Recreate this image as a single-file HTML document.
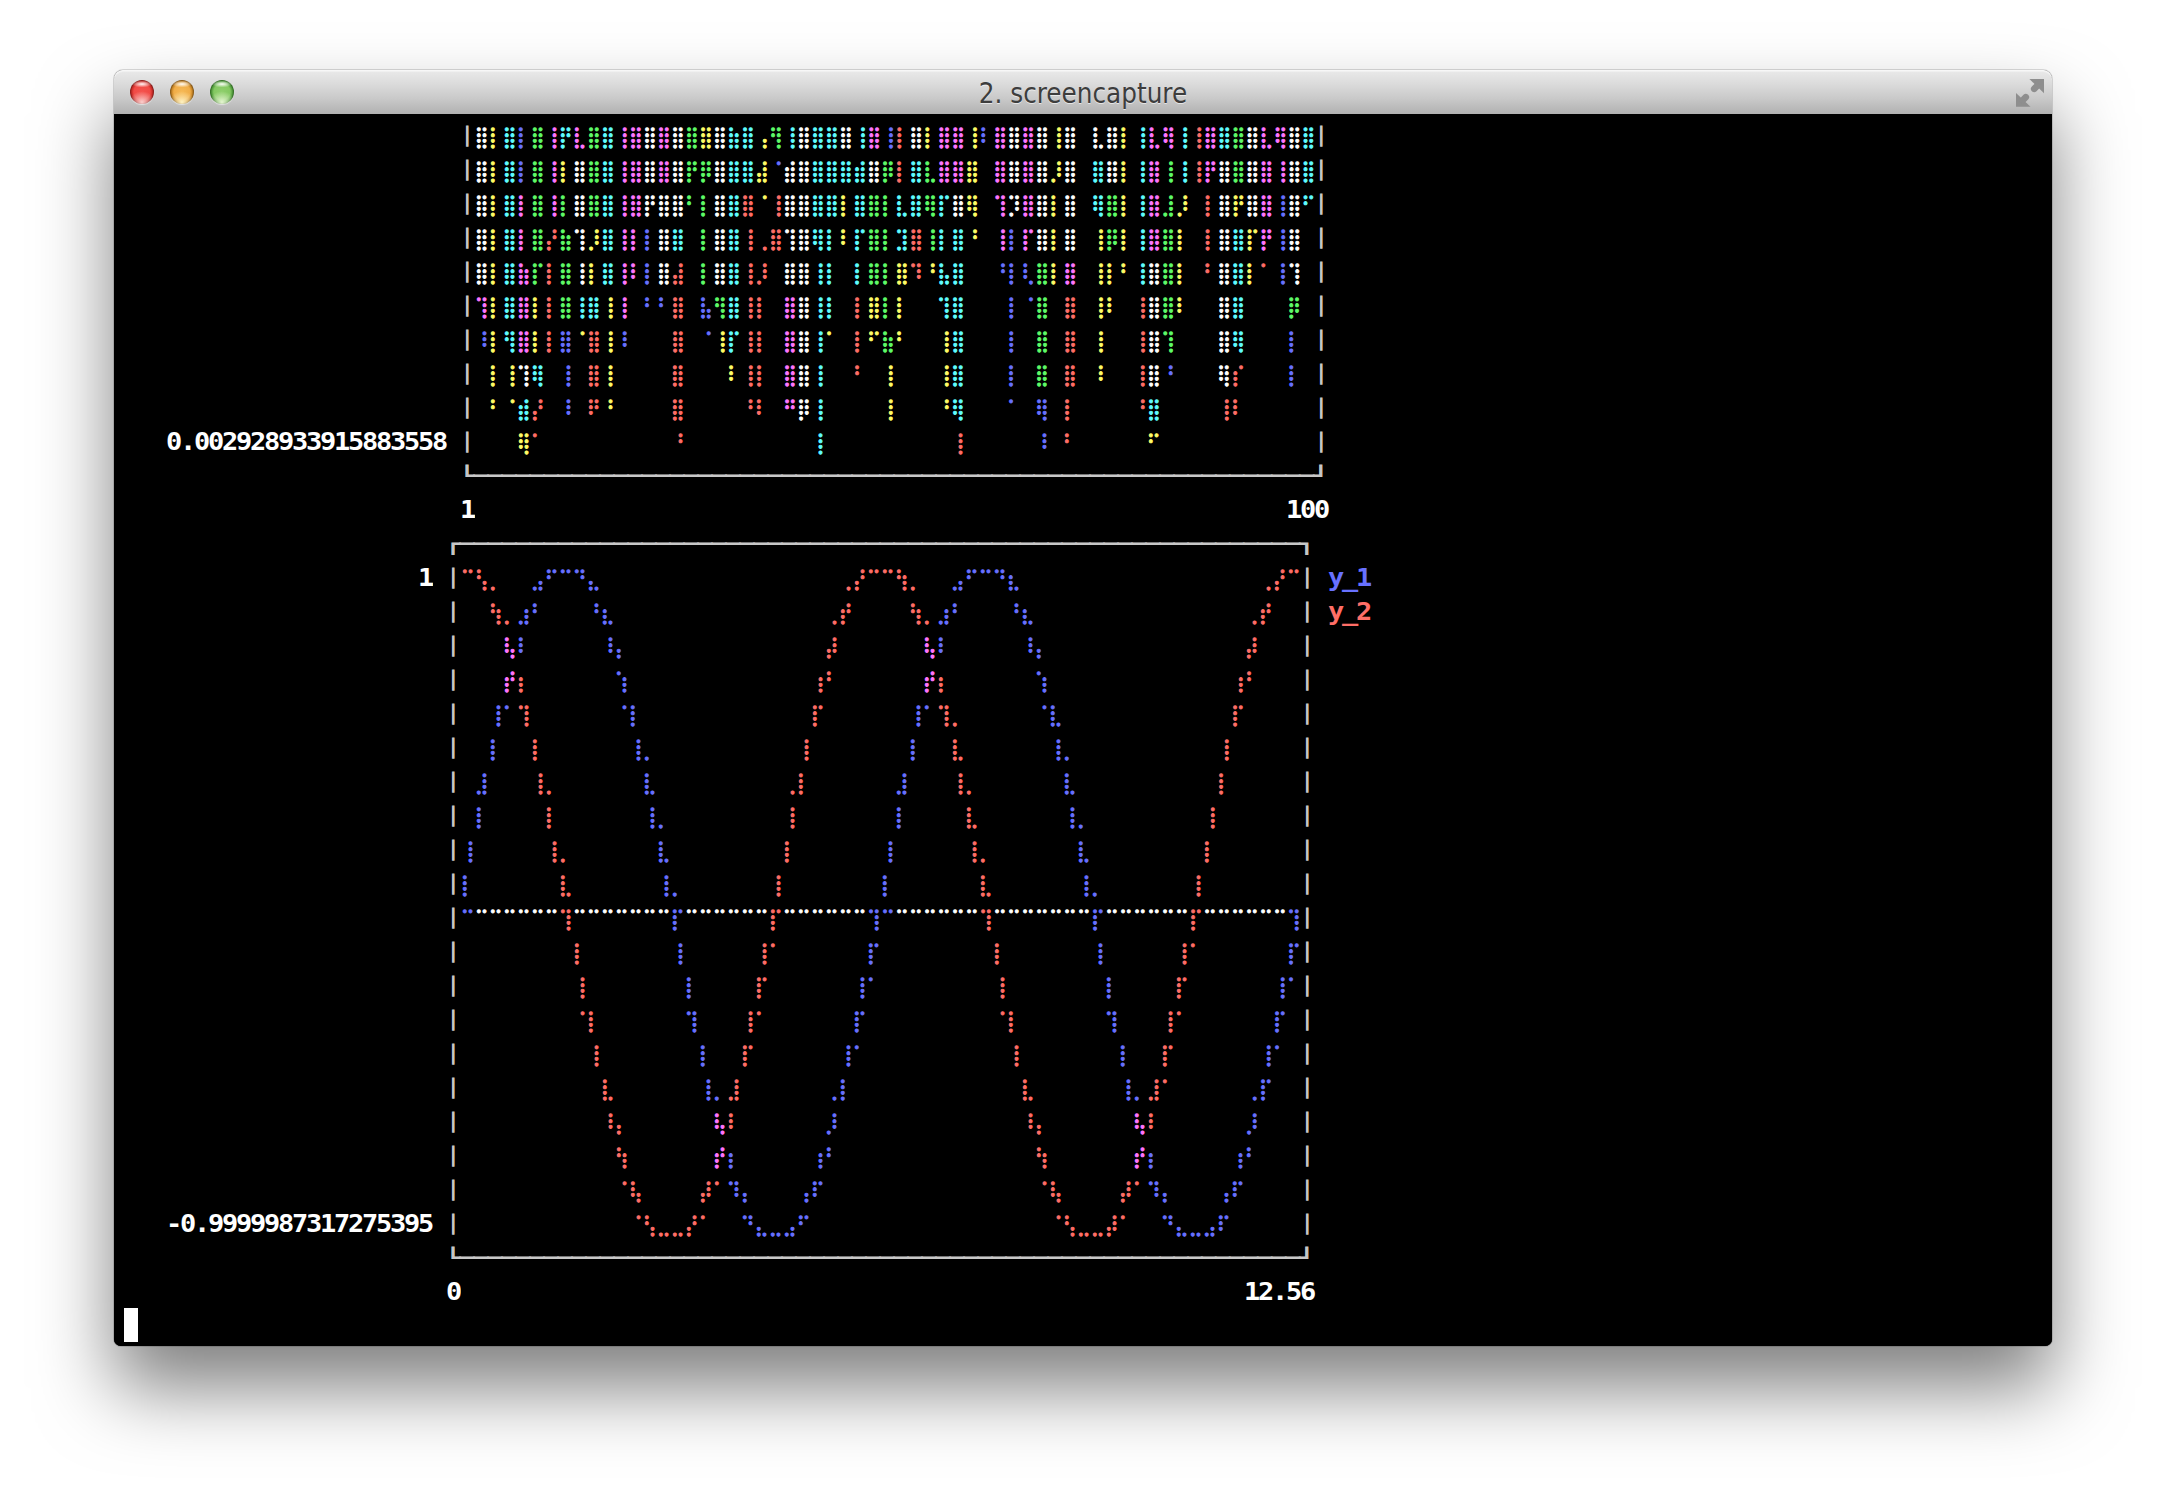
<!DOCTYPE html>
<html lang="en"><head><meta charset="utf-8"><title>2. screencapture</title>
<style>
html,body{margin:0;padding:0;background:#fff;}
body{width:2166px;height:1504px;position:relative;overflow:hidden;font-family:"DejaVu Sans Mono","Liberation Mono",monospace;}
.win{position:absolute;left:114px;top:70px;width:1938px;height:1276px;border-radius:9px 9px 7px 7px;background:#000;
 box-shadow:0 0 0 1px rgba(0,0,0,.1),0 0 1px rgba(0,0,0,.4),0 42px 76px rgba(0,0,0,.5);}
.tb{position:absolute;left:0;top:0;width:1938px;height:44px;border-radius:9px 9px 0 0;
 background:linear-gradient(#eaeaea 0%,#dcdcdc 30%,#c9c9c9 65%,#b1b1b1 100%);box-shadow:inset 0 1px 0 #f7f7f7,inset 0 2px 0 rgba(255,255,255,.35);}
.ttl{position:absolute;left:0;top:0;width:1938px;height:44px;line-height:46px;text-align:center;font-family:"DejaVu Sans Condensed","Liberation Sans",sans-serif;font-size:27.5px;color:#3d3d3d;text-shadow:0 1px 0 rgba(255,255,255,.6);}
.lt{position:absolute;top:10px;width:24px;height:24px;border-radius:50%;box-shadow:0 1px 1px rgba(255,255,255,.55);}
.lt.r1{background:radial-gradient(ellipse 42% 14% at 50% 17%,rgba(255,255,255,.95),rgba(255,255,255,0) 100%),radial-gradient(ellipse 55% 45% at 50% 92%,#fbd0ce 0%,rgba(251,190,188,0) 100%),radial-gradient(circle closest-side at 50% 50%,#f5524d 0%,#f04b46 68%,#cf312c 84%,#97201c 94%,#7e1815 100%);}
.lt.y1{background:radial-gradient(ellipse 42% 14% at 50% 17%,rgba(255,255,255,.95),rgba(255,255,255,0) 100%),radial-gradient(ellipse 55% 45% at 50% 92%,#fff3c4 0%,rgba(255,240,180,0) 100%),radial-gradient(circle closest-side at 50% 50%,#f6b955 0%,#f0ad48 68%,#cc8a2a 84%,#95621a 94%,#7c4f10 100%);}
.lt.g1{background:radial-gradient(ellipse 42% 14% at 50% 17%,rgba(255,255,255,.95),rgba(255,255,255,0) 100%),radial-gradient(ellipse 55% 45% at 50% 92%,#e6f6d2 0%,rgba(220,245,200,0) 100%),radial-gradient(circle closest-side at 50% 50%,#8fcf6c 0%,#84c862 68%,#5aa343 84%,#3a7a2a 94%,#2d651f 100%);}
.fs{position:absolute;left:1902px;top:9px;width:28px;height:28px;}
.term{position:absolute;left:0;top:44px;width:1938px;height:1232px;background:#000;border-radius:0 0 7px 7px;}
.t,.vb,.hb,.br{position:absolute;height:34px;line-height:34px;white-space:pre;}
.t{color:#fff;font-weight:bold;font-size:27px;letter-spacing:-2.254px;margin-left:-.1px;transform:scaleY(.945);transform-origin:0 26.5px;}
.vb,.hb{color:#c7c7c7;}
.vb{font-size:16.7px;width:14px;text-align:center;-webkit-text-stroke:1.2px;margin-top:1.3px;}
.hb{font-size:23.25px;-webkit-text-stroke:1.4px;transform:scaleY(.78);transform-origin:0 50%;margin-top:1.2px;}
.br{font-family:"DejaVu Serif","DejaVu Sans",serif;font-size:19.5px;letter-spacing:-.282px;-webkit-text-stroke:.85px;color:#fff;transform:scaleY(1.061);transform-origin:0 0;margin:1.7px 0 0 .5px;}
.w{color:#fff}.y{color:#fffc67}.c{color:#60fdff}.b{color:#6871ff}.g{color:#5ffa68}.m{color:#ff77ff}.r{color:#ff6e67}
.cur{position:absolute;left:124px;top:1308px;width:14px;height:34px;background:#fff;}
</style></head><body>
<div class="win"><div class="tb"></div>
<div class="lt r1" style="left:16px"></div>
<div class="lt y1" style="left:56px"></div>
<div class="lt g1" style="left:96px"></div>
<svg class="fs" viewBox="0 0 28 28"><g fill="#8e8e8e" stroke="#8e8e8e"><path d="M13.4 0H28V14.2Z" stroke="none"/><path d="M0 14V27.8H14.5Z" stroke="none"/><line x1="21" y1="7" x2="18.2" y2="9.8" stroke-width="6.6" stroke-linecap="round"/><line x1="7" y1="21" x2="9.8" y2="18.2" stroke-width="6.6" stroke-linecap="round"/></g></svg>
<div class="ttl">2. screencapture</div>
<div class="term"></div></div>
<div class="vb" style="left:460px;top:118px">│</div>
<div class="br" style="left:474px;top:118px"><span class="w">⣿</span><span class="y">⡇</span><span class="c">⣿</span><span class="b">⡇</span><span class="g">⣿</span><span class="m">⢸</span><span class="c">⡟</span><span class="m">⣇</span><span class="g">⣿</span><span class="c">⣿</span><span class="m">⢸⣿</span><span class="w">⣿</span><span class="m">⣿</span><span class="w">⣿</span><span class="g">⣿</span><span class="y">⣿</span><span class="w">⣿</span><span class="c">⣷⣿</span><span class="y">⢠</span><span class="g">⢻</span><span class="c">⢸</span><span class="w">⣿</span><span class="c">⣿⣿</span><span class="w">⣿</span><span class="c">⢸</span><span class="m">⣿</span><span class="b">⢸</span><span class="r">⡇</span><span class="w">⣿</span><span class="y">⡇</span><span class="m">⣿⣿</span><span class="y">⢸</span><span class="b">⠇</span><span class="m">⣿</span><span class="w">⣿</span><span class="m">⣿</span><span class="w">⣿</span><span class="y">⢸</span><span class="w">⣿⠀⣇⣿</span><span class="y">⡇</span><span class="c">⢸</span><span class="m">⣇⢿</span><span class="c">⢸</span><span class="r">⢸</span><span class="m">⣿</span><span class="c">⣿</span><span class="g">⣿</span><span class="w">⣿</span><span class="m">⣇⢿</span><span class="w">⣿</span><span class="c">⣿</span></div>
<div class="vb" style="left:1314px;top:118px">│</div>
<div class="vb" style="left:460px;top:152px">│</div>
<div class="br" style="left:474px;top:152px"><span class="w">⣿</span><span class="y">⡇</span><span class="c">⣿</span><span class="b">⡇</span><span class="g">⣿</span><span class="m">⢸</span><span class="y">⡇</span><span class="w">⣿</span><span class="g">⣿</span><span class="c">⣿</span><span class="m">⢸⣿</span><span class="w">⣿</span><span class="m">⣿</span><span class="w">⣿</span><span class="g">⡟⡿</span><span class="w">⣿</span><span class="c">⣿⣿</span><span class="y">⣼</span><span class="b">⠈</span><span class="w">⣾⣿</span><span class="c">⣿⣿⣿⣾</span><span class="w">⣿</span><span class="g">⡿</span><span class="r">⡇</span><span class="c">⣿</span><span class="g">⣇</span><span class="m">⣿⣿</span><span class="y">⣿⠀</span><span class="m">⣿</span><span class="w">⣿</span><span class="m">⣿</span><span class="w">⣿</span><span class="y">⡸</span><span class="w">⣿⠀</span><span class="c">⣿</span><span class="w">⣿</span><span class="y">⡇</span><span class="c">⢸</span><span class="m">⣿</span><span class="g">⢸</span><span class="c">⢸</span><span class="r">⢸</span><span class="m">⡟</span><span class="w">⣿</span><span class="g">⣿</span><span class="w">⣿</span><span class="m">⣿⢸</span><span class="w">⣿</span><span class="c">⣿</span></div>
<div class="vb" style="left:1314px;top:152px">│</div>
<div class="vb" style="left:460px;top:186px">│</div>
<div class="br" style="left:474px;top:186px"><span class="w">⣿</span><span class="y">⡇</span><span class="c">⣿</span><span class="m">⡇</span><span class="g">⣿</span><span class="m">⢸</span><span class="g">⡇</span><span class="w">⣿</span><span class="g">⣿</span><span class="c">⣿</span><span class="m">⢸⣿</span><span class="w">⡟⣿⣿</span><span class="g">⠃⡇</span><span class="w">⣿</span><span class="c">⣿</span><span class="r">⣿</span><span class="y">⠈</span><span class="r">⢸</span><span class="w">⣿⣿</span><span class="c">⣿⣿</span><span class="y">⡇</span><span class="c">⣿</span><span class="g">⣿⡇</span><span class="c">⣇⣿</span><span class="g">⢿</span><span class="c">⡏</span><span class="w">⣿</span><span class="y">⢿⠀</span><span class="m">⢹</span><span class="w">⡹</span><span class="m">⣿</span><span class="w">⣿</span><span class="y">⡇</span><span class="w">⣿⠀</span><span class="c">⢿</span><span class="g">⣿</span><span class="y">⡇</span><span class="c">⢸</span><span class="m">⣿</span><span class="g">⣸</span><span class="y">⡸⠀</span><span class="r">⡇</span><span class="w">⣿</span><span class="y">⡟</span><span class="w">⣿</span><span class="m">⣿</span><span class="b">⢸</span><span class="w">⣿</span><span class="c">⠋</span></div>
<div class="vb" style="left:1314px;top:186px">│</div>
<div class="vb" style="left:460px;top:220px">│</div>
<div class="br" style="left:474px;top:220px"><span class="w">⣿</span><span class="y">⡇</span><span class="c">⣿</span><span class="m">⡇</span><span class="g">⣿</span><span class="r">⡜</span><span class="g">⣷</span><span class="w">⢹</span><span class="y">⡸</span><span class="c">⣿</span><span class="m">⢸⡇</span><span class="b">⡇</span><span class="w">⣿</span><span class="c">⣿⠀</span><span class="g">⡇</span><span class="w">⣿</span><span class="c">⣿</span><span class="r">⢸⢀⣿</span><span class="w">⢹⣿</span><span class="c">⢿⡇</span><span class="y">⠇</span><span class="c">⡏</span><span class="g">⣿⡇</span><span class="c">⣹</span><span class="r">⣿</span><span class="g">⢸</span><span class="c">⡇⣿</span><span class="y">⠘⠀</span><span class="m">⢸</span><span class="b">⡇</span><span class="m">⡏</span><span class="w">⣿</span><span class="y">⡇</span><span class="w">⣿⠀</span><span class="y">⢸</span><span class="g">⡿</span><span class="y">⡇</span><span class="c">⢸</span><span class="m">⣿</span><span class="g">⣿</span><span class="y">⡇⠀</span><span class="r">⡇</span><span class="w">⣿</span><span class="c">⣿</span><span class="y">⡏</span><span class="m">⡟</span><span class="b">⢸</span><span class="w">⣿⠀</span></div>
<div class="vb" style="left:1314px;top:220px">│</div>
<div class="vb" style="left:460px;top:254px">│</div>
<div class="br" style="left:474px;top:254px"><span class="w">⣿</span><span class="y">⡇</span><span class="c">⣿</span><span class="m">⣷</span><span class="g">⡏</span><span class="r">⡇</span><span class="g">⣿</span><span class="w">⢸</span><span class="y">⡇</span><span class="c">⣿</span><span class="m">⢸⠇</span><span class="b">⡇</span><span class="w">⣿</span><span class="r">⣼⠀</span><span class="g">⡇</span><span class="w">⣿</span><span class="c">⣿</span><span class="r">⢸⡸⠀</span><span class="w">⣿⣿</span><span class="c">⢸⡇⠀⡇</span><span class="g">⣿⡇</span><span class="y">⣿</span><span class="r">⠹</span><span class="y">⠘</span><span class="c">⣧⣿⠀⠀</span><span class="b">⠘⡇⢇</span><span class="g">⣿</span><span class="y">⡇</span><span class="m">⣿⠀</span><span class="y">⢸⡇⠃</span><span class="c">⢸</span><span class="w">⣿</span><span class="g">⣿</span><span class="y">⡇⠀</span><span class="r">⠃</span><span class="w">⣿</span><span class="c">⣿</span><span class="y">⡇</span><span class="r">⠁</span><span class="b">⢸</span><span class="w">⢹⠀</span></div>
<div class="vb" style="left:1314px;top:254px">│</div>
<div class="vb" style="left:460px;top:288px">│</div>
<div class="br" style="left:474px;top:288px"><span class="m">⢹</span><span class="y">⡇</span><span class="c">⣿</span><span class="m">⣿</span><span class="y">⡇</span><span class="r">⡇</span><span class="g">⣿</span><span class="c">⢸⣿</span><span class="y">⢸</span><span class="m">⢸⠀</span><span class="b">⠃⠃</span><span class="r">⣿⠀</span><span class="b">⣧</span><span class="g">⢻</span><span class="c">⣿</span><span class="r">⢸⡇⠀</span><span class="m">⣿</span><span class="w">⣿</span><span class="c">⢸⡇⠀</span><span class="r">⡇</span><span class="y">⣿</span><span class="g">⡇</span><span class="y">⡇⠀⠀</span><span class="c">⢹⣿⠀⠀⠀</span><span class="b">⡇⠈</span><span class="g">⣿⠀</span><span class="r">⣿⠀</span><span class="y">⢸⠇⠀</span><span class="r">⢸</span><span class="w">⣿</span><span class="g">⣿</span><span class="y">⠇⠀⠀</span><span class="w">⣿</span><span class="c">⣿⠀⠀⠀</span><span class="g">⡿⠀</span></div>
<div class="vb" style="left:1314px;top:288px">│</div>
<div class="vb" style="left:460px;top:322px">│</div>
<div class="br" style="left:474px;top:322px"><span class="b">⠸</span><span class="y">⡇</span><span class="c">⢻</span><span class="m">⣿</span><span class="y">⡇</span><span class="r">⡇</span><span class="b">⣿</span><span class="y">⠈</span><span class="r">⣿</span><span class="y">⢸</span><span class="b">⠸⠀⠀⠀</span><span class="r">⣿⠀</span><span class="b">⠈</span><span class="y">⢸</span><span class="c">⡏</span><span class="r">⢸⡇⠀</span><span class="m">⣿</span><span class="w">⣿</span><span class="c">⢸</span><span class="y">⠁⠀</span><span class="r">⡇</span><span class="y">⠋</span><span class="g">⣷</span><span class="y">⠃⠀⠀⢸</span><span class="c">⣿⠀⠀⠀</span><span class="b">⡇⠀</span><span class="g">⣿⠀</span><span class="r">⣿⠀</span><span class="y">⢸⠀⠀</span><span class="r">⢸</span><span class="w">⣿</span><span class="g">⢹⠀⠀⠀</span><span class="w">⣿</span><span class="c">⢿⠀⠀⠀</span><span class="b">⡇⠀</span></div>
<div class="vb" style="left:1314px;top:322px">│</div>
<div class="vb" style="left:460px;top:356px">│</div>
<div class="br" style="left:474px;top:356px">⠀<span class="y">⡇⢸</span><span class="w">⢹</span><span class="c">⢿⠀</span><span class="b">⢸⠀</span><span class="r">⣿</span><span class="y">⢸⠀⠀⠀⠀</span><span class="r">⣿⠀⠀⠀</span><span class="y">⠇</span><span class="r">⢸⡇⠀</span><span class="m">⣿</span><span class="w">⣿</span><span class="c">⢸⠀⠀</span><span class="r">⠃⠀</span><span class="y">⢸⠀⠀⠀⢸</span><span class="c">⣿⠀⠀⠀</span><span class="b">⡇⠀</span><span class="g">⣿⠀</span><span class="r">⣿⠀</span><span class="y">⠸⠀⠀</span><span class="r">⢸</span><span class="w">⣿</span><span class="b">⠘⠀⠀⠀</span><span class="w">⢿</span><span class="r">⡎⠀⠀⠀</span><span class="b">⡇⠀</span></div>
<div class="vb" style="left:1314px;top:356px">│</div>
<div class="vb" style="left:460px;top:390px">│</div>
<div class="br" style="left:474px;top:390px">⠀<span class="y">⠃⠈</span><span class="c">⣾</span><span class="r">⡜⠀</span><span class="b">⠸⠀</span><span class="r">⠟</span><span class="y">⠘⠀⠀⠀⠀</span><span class="r">⣿⠀⠀⠀⠀⠘⠇⠀</span><span class="m">⠛</span><span class="w">⡿</span><span class="c">⢸⠀⠀⠀⠀</span><span class="y">⢸⠀⠀⠀⠘</span><span class="c">⢿⠀⠀⠀</span><span class="b">⠁⠀⢿⠀</span><span class="r">⡇⠀⠀⠀⠀⠘</span><span class="c">⣿⠀⠀⠀⠀</span><span class="r">⢸⠇⠀⠀⠀⠀⠀</span></div>
<div class="vb" style="left:1314px;top:390px">│</div>
<div class="vb" style="left:460px;top:424px">│</div>
<div class="br" style="left:474px;top:424px">⠀⠀⠀<span class="y">⢿</span><span class="r">⠁⠀⠀⠀⠀⠀⠀⠀⠀⠀⠘⠀⠀⠀⠀⠀⠀⠀⠀⠀</span><span class="c">⢸⠀⠀⠀⠀⠀⠀⠀⠀⠀</span><span class="r">⢸⠀⠀⠀⠀⠀</span><span class="b">⠸⠀</span><span class="r">⠃⠀⠀⠀⠀⠀</span><span class="y">⠋⠀⠀⠀⠀⠀⠀⠀⠀⠀⠀⠀</span></div>
<div class="vb" style="left:1314px;top:424px">│</div>
<div class="t" style="left:166px;top:424px">0.002928933915883558</div>
<div class="hb" style="left:460px;top:458px">└────────────────────────────────────────────────────────────┘</div>
<div class="t" style="left:460px;top:492px">1</div>
<div class="t" style="left:1286px;top:492px">100</div>
<div class="hb" style="left:446px;top:526px">┌────────────────────────────────────────────────────────────┐</div>
<div class="vb" style="left:446px;top:560px">│</div>
<div class="br" style="left:460px;top:560px"><span class="r">⠉⢣⡀⠀⠀</span><span class="b">⣠⠋⠉⠙⣄⠀⠀⠀⠀⠀⠀⠀⠀⠀⠀⠀⠀⠀⠀⠀⠀⠀</span><span class="r">⢀⡜⠉⠉⢳⡀⠀⠀</span><span class="b">⣠⠋⠉⠙⣆⠀⠀⠀⠀⠀⠀⠀⠀⠀⠀⠀⠀⠀⠀⠀⠀⠀</span><span class="r">⢀⡜⠉</span></div>
<div class="vb" style="left:1300px;top:560px">│</div>
<div class="vb" style="left:446px;top:594px">│</div>
<div class="br" style="left:460px;top:594px">⠀⠀<span class="r">⢳⡀</span><span class="b">⣰⠃⠀⠀⠀⠘⣆⠀⠀⠀⠀⠀⠀⠀⠀⠀⠀⠀⠀⠀⠀⠀</span><span class="r">⢀⡞⠀⠀⠀⠀⢳⡀</span><span class="b">⣰⠃⠀⠀⠀⠘⣆⠀⠀⠀⠀⠀⠀⠀⠀⠀⠀⠀⠀⠀⠀⠀</span><span class="r">⢀⡞⠀⠀</span></div>
<div class="vb" style="left:1300px;top:594px">│</div>
<div class="vb" style="left:446px;top:628px">│</div>
<div class="br" style="left:460px;top:628px">⠀⠀⠀<span class="m">⢧</span><span class="b">⠇⠀⠀⠀⠀⠀⠸⡄⠀⠀⠀⠀⠀⠀⠀⠀⠀⠀⠀⠀⠀⠀</span><span class="r">⡼⠀⠀⠀⠀⠀⠀</span><span class="m">⢧</span><span class="b">⠇⠀⠀⠀⠀⠀⠸⡄⠀⠀⠀⠀⠀⠀⠀⠀⠀⠀⠀⠀⠀⠀</span><span class="r">⡼⠀⠀⠀</span></div>
<div class="vb" style="left:1300px;top:628px">│</div>
<div class="vb" style="left:446px;top:662px">│</div>
<div class="br" style="left:460px;top:662px">⠀⠀⠀<span class="m">⡞</span><span class="r">⡆⠀⠀⠀⠀⠀⠀</span><span class="b">⢱⠀⠀⠀⠀⠀⠀⠀⠀⠀⠀⠀⠀⠀</span><span class="r">⢰⠃⠀⠀⠀⠀⠀⠀</span><span class="m">⡞</span><span class="r">⡆⠀⠀⠀⠀⠀⠀</span><span class="b">⢱⠀⠀⠀⠀⠀⠀⠀⠀⠀⠀⠀⠀⠀</span><span class="r">⢰⠃⠀⠀⠀</span></div>
<div class="vb" style="left:1300px;top:662px">│</div>
<div class="vb" style="left:446px;top:696px">│</div>
<div class="br" style="left:460px;top:696px">⠀⠀<span class="b">⢸⠁</span><span class="r">⢹⠀⠀⠀⠀⠀⠀</span><span class="b">⠈⡇⠀⠀⠀⠀⠀⠀⠀⠀⠀⠀⠀⠀</span><span class="r">⡏⠀⠀⠀⠀⠀⠀</span><span class="b">⢸⠁</span><span class="r">⢹⡀⠀⠀⠀⠀⠀</span><span class="b">⠈⣇⠀⠀⠀⠀⠀⠀⠀⠀⠀⠀⠀⠀</span><span class="r">⡏⠀⠀⠀⠀</span></div>
<div class="vb" style="left:1300px;top:696px">│</div>
<div class="vb" style="left:446px;top:730px">│</div>
<div class="br" style="left:460px;top:730px">⠀⠀<span class="b">⡇⠀⠀</span><span class="r">⡇⠀⠀⠀⠀⠀⠀</span><span class="b">⢸⡀⠀⠀⠀⠀⠀⠀⠀⠀⠀⠀</span><span class="r">⢸⠀⠀⠀⠀⠀⠀⠀</span><span class="b">⡇⠀⠀</span><span class="r">⣇⠀⠀⠀⠀⠀⠀</span><span class="b">⢸⡀⠀⠀⠀⠀⠀⠀⠀⠀⠀⠀</span><span class="r">⢸⠀⠀⠀⠀⠀</span></div>
<div class="vb" style="left:1300px;top:730px">│</div>
<div class="vb" style="left:446px;top:764px">│</div>
<div class="br" style="left:460px;top:764px">⠀<span class="b">⣸⠀⠀⠀</span><span class="r">⢸⡀⠀⠀⠀⠀⠀⠀</span><span class="b">⣇⠀⠀⠀⠀⠀⠀⠀⠀⠀</span><span class="r">⢀⡇⠀⠀⠀⠀⠀⠀</span><span class="b">⣸⠀⠀⠀</span><span class="r">⢸⡀⠀⠀⠀⠀⠀⠀</span><span class="b">⣇⠀⠀⠀⠀⠀⠀⠀⠀⠀⠀</span><span class="r">⡇⠀⠀⠀⠀⠀</span></div>
<div class="vb" style="left:1300px;top:764px">│</div>
<div class="vb" style="left:446px;top:798px">│</div>
<div class="br" style="left:460px;top:798px">⠀<span class="b">⡇⠀⠀⠀⠀</span><span class="r">⡇⠀⠀⠀⠀⠀⠀</span><span class="b">⢸⡀⠀⠀⠀⠀⠀⠀⠀⠀</span><span class="r">⢸⠀⠀⠀⠀⠀⠀⠀</span><span class="b">⡇⠀⠀⠀⠀</span><span class="r">⣇⠀⠀⠀⠀⠀⠀</span><span class="b">⢸⡀⠀⠀⠀⠀⠀⠀⠀⠀</span><span class="r">⢸⠀⠀⠀⠀⠀⠀</span></div>
<div class="vb" style="left:1300px;top:798px">│</div>
<div class="vb" style="left:446px;top:832px">│</div>
<div class="br" style="left:460px;top:832px"><span class="b">⢸⠀⠀⠀⠀⠀</span><span class="r">⢸⡀⠀⠀⠀⠀⠀⠀</span><span class="b">⣇⠀⠀⠀⠀⠀⠀⠀⠀</span><span class="r">⡇⠀⠀⠀⠀⠀⠀</span><span class="b">⢸⠀⠀⠀⠀⠀</span><span class="r">⢸⡀⠀⠀⠀⠀⠀⠀</span><span class="b">⣇⠀⠀⠀⠀⠀⠀⠀⠀</span><span class="r">⡇⠀⠀⠀⠀⠀⠀</span></div>
<div class="vb" style="left:1300px;top:832px">│</div>
<div class="vb" style="left:446px;top:866px">│</div>
<div class="br" style="left:460px;top:866px"><span class="b">⡇⠀⠀⠀⠀⠀⠀</span><span class="r">⣇⠀⠀⠀⠀⠀⠀</span><span class="b">⢸⡀⠀⠀⠀⠀⠀⠀</span><span class="r">⢸⠀⠀⠀⠀⠀⠀⠀</span><span class="b">⡇⠀⠀⠀⠀⠀⠀</span><span class="r">⣇⠀⠀⠀⠀⠀⠀</span><span class="b">⢸⡀⠀⠀⠀⠀⠀⠀</span><span class="r">⢸⠀⠀⠀⠀⠀⠀⠀</span></div>
<div class="vb" style="left:1300px;top:866px">│</div>
<div class="vb" style="left:446px;top:900px">│</div>
<div class="br" style="left:460px;top:900px"><span class="b">⠉</span><span class="w">⠉⠉⠉⠉⠉⠉</span><span class="r">⢹</span><span class="w">⠉⠉⠉⠉⠉⠉⠉</span><span class="b">⡏</span><span class="w">⠉⠉⠉⠉⠉⠉</span><span class="r">⡏</span><span class="w">⠉⠉⠉⠉⠉⠉</span><span class="b">⢹⠉</span><span class="w">⠉⠉⠉⠉⠉⠉</span><span class="r">⢹</span><span class="w">⠉⠉⠉⠉⠉⠉⠉</span><span class="b">⡏</span><span class="w">⠉⠉⠉⠉⠉⠉</span><span class="r">⡏</span><span class="w">⠉⠉⠉⠉⠉⠉</span><span class="b">⢹</span></div>
<div class="vb" style="left:1300px;top:900px">│</div>
<div class="vb" style="left:446px;top:934px">│</div>
<div class="br" style="left:460px;top:934px">⠀⠀⠀⠀⠀⠀⠀⠀<span class="r">⡇⠀⠀⠀⠀⠀⠀</span><span class="b">⢸⠀⠀⠀⠀⠀</span><span class="r">⢸⠁⠀⠀⠀⠀⠀⠀</span><span class="b">⡏⠀⠀⠀⠀⠀⠀⠀⠀</span><span class="r">⡇⠀⠀⠀⠀⠀⠀</span><span class="b">⢸⠀⠀⠀⠀⠀</span><span class="r">⢸⠁⠀⠀⠀⠀⠀⠀</span><span class="b">⡏</span></div>
<div class="vb" style="left:1300px;top:934px">│</div>
<div class="vb" style="left:446px;top:968px">│</div>
<div class="br" style="left:460px;top:968px">⠀⠀⠀⠀⠀⠀⠀⠀<span class="r">⢸⠀⠀⠀⠀⠀⠀⠀</span><span class="b">⡇⠀⠀⠀⠀</span><span class="r">⡏⠀⠀⠀⠀⠀⠀</span><span class="b">⢸⠁⠀⠀⠀⠀⠀⠀⠀⠀</span><span class="r">⢸⠀⠀⠀⠀⠀⠀⠀</span><span class="b">⡇⠀⠀⠀⠀</span><span class="r">⡏⠀⠀⠀⠀⠀⠀</span><span class="b">⢸⠁</span></div>
<div class="vb" style="left:1300px;top:968px">│</div>
<div class="vb" style="left:446px;top:1002px">│</div>
<div class="br" style="left:460px;top:1002px">⠀⠀⠀⠀⠀⠀⠀⠀<span class="r">⠈⡇⠀⠀⠀⠀⠀⠀</span><span class="b">⢹⠀⠀⠀</span><span class="r">⢸⠁⠀⠀⠀⠀⠀⠀</span><span class="b">⡏⠀⠀⠀⠀⠀⠀⠀⠀⠀</span><span class="r">⠈⡇⠀⠀⠀⠀⠀⠀</span><span class="b">⢹⠀⠀⠀</span><span class="r">⢸⠁⠀⠀⠀⠀⠀⠀</span><span class="b">⡏⠀</span></div>
<div class="vb" style="left:1300px;top:1002px">│</div>
<div class="vb" style="left:446px;top:1036px">│</div>
<div class="br" style="left:460px;top:1036px">⠀⠀⠀⠀⠀⠀⠀⠀⠀<span class="r">⢸⠀⠀⠀⠀⠀⠀⠀</span><span class="b">⡇⠀⠀</span><span class="r">⡏⠀⠀⠀⠀⠀⠀</span><span class="b">⢸⠁⠀⠀⠀⠀⠀⠀⠀⠀⠀⠀</span><span class="r">⢸⠀⠀⠀⠀⠀⠀⠀</span><span class="b">⡇⠀⠀</span><span class="r">⡏⠀⠀⠀⠀⠀⠀</span><span class="b">⢸⠁⠀</span></div>
<div class="vb" style="left:1300px;top:1036px">│</div>
<div class="vb" style="left:446px;top:1070px">│</div>
<div class="br" style="left:460px;top:1070px">⠀⠀⠀⠀⠀⠀⠀⠀⠀⠀<span class="r">⣇⠀⠀⠀⠀⠀⠀</span><span class="b">⢸⡀</span><span class="r">⣸⠀⠀⠀⠀⠀⠀</span><span class="b">⢀⡇⠀⠀⠀⠀⠀⠀⠀⠀⠀⠀⠀⠀</span><span class="r">⣇⠀⠀⠀⠀⠀⠀</span><span class="b">⢸⡀</span><span class="r">⣸⠁⠀⠀⠀⠀⠀</span><span class="b">⢀⡏⠀⠀</span></div>
<div class="vb" style="left:1300px;top:1070px">│</div>
<div class="vb" style="left:446px;top:1104px">│</div>
<div class="br" style="left:460px;top:1104px">⠀⠀⠀⠀⠀⠀⠀⠀⠀⠀<span class="r">⠸⡄⠀⠀⠀⠀⠀⠀</span><span class="m">⢧</span><span class="r">⠇⠀⠀⠀⠀⠀⠀</span><span class="b">⡸⠀⠀⠀⠀⠀⠀⠀⠀⠀⠀⠀⠀⠀</span><span class="r">⠸⡄⠀⠀⠀⠀⠀⠀</span><span class="m">⢧</span><span class="r">⠇⠀⠀⠀⠀⠀⠀</span><span class="b">⡸⠀⠀⠀</span></div>
<div class="vb" style="left:1300px;top:1104px">│</div>
<div class="vb" style="left:446px;top:1138px">│</div>
<div class="br" style="left:460px;top:1138px">⠀⠀⠀⠀⠀⠀⠀⠀⠀⠀⠀<span class="r">⢳⠀⠀⠀⠀⠀⠀</span><span class="m">⡞</span><span class="b">⡆⠀⠀⠀⠀⠀⢰⠃⠀⠀⠀⠀⠀⠀⠀⠀⠀⠀⠀⠀⠀⠀</span><span class="r">⢳⠀⠀⠀⠀⠀⠀</span><span class="m">⡞</span><span class="b">⡆⠀⠀⠀⠀⠀⢰⠃⠀⠀⠀</span></div>
<div class="vb" style="left:1300px;top:1138px">│</div>
<div class="vb" style="left:446px;top:1172px">│</div>
<div class="br" style="left:460px;top:1172px">⠀⠀⠀⠀⠀⠀⠀⠀⠀⠀⠀<span class="r">⠈⢧⠀⠀⠀⠀⡼⠁</span><span class="b">⠹⡄⠀⠀⠀⢠⠏⠀⠀⠀⠀⠀⠀⠀⠀⠀⠀⠀⠀⠀⠀⠀</span><span class="r">⠈⢧⠀⠀⠀⠀⡼⠁</span><span class="b">⠹⡄⠀⠀⠀⢠⠏⠀⠀⠀⠀</span></div>
<div class="vb" style="left:1300px;top:1172px">│</div>
<div class="vb" style="left:446px;top:1206px">│</div>
<div class="br" style="left:460px;top:1206px">⠀⠀⠀⠀⠀⠀⠀⠀⠀⠀⠀⠀<span class="r">⠈⢣⣀⣀⡜⠁⠀⠀</span><span class="b">⠙⣄⣀⣠⠋⠀⠀⠀⠀⠀⠀⠀⠀⠀⠀⠀⠀⠀⠀⠀⠀⠀</span><span class="r">⠈⢣⣀⣀⡼⠁⠀⠀</span><span class="b">⠙⣄⣀⣠⠏⠀⠀⠀⠀⠀</span></div>
<div class="vb" style="left:1300px;top:1206px">│</div>
<div class="t" style="left:418px;top:560px">1</div>
<div class="t" style="left:166px;top:1206px">-0.9999987317275395</div>
<div class="t b" style="left:1328px;top:560px">y_1</div>
<div class="t r" style="left:1328px;top:594px">y_2</div>
<div class="hb" style="left:446px;top:1240px">└────────────────────────────────────────────────────────────┘</div>
<div class="t" style="left:446px;top:1274px">0</div>
<div class="t" style="left:1244px;top:1274px">12.56</div>
<div class="cur"></div>
</body></html>
